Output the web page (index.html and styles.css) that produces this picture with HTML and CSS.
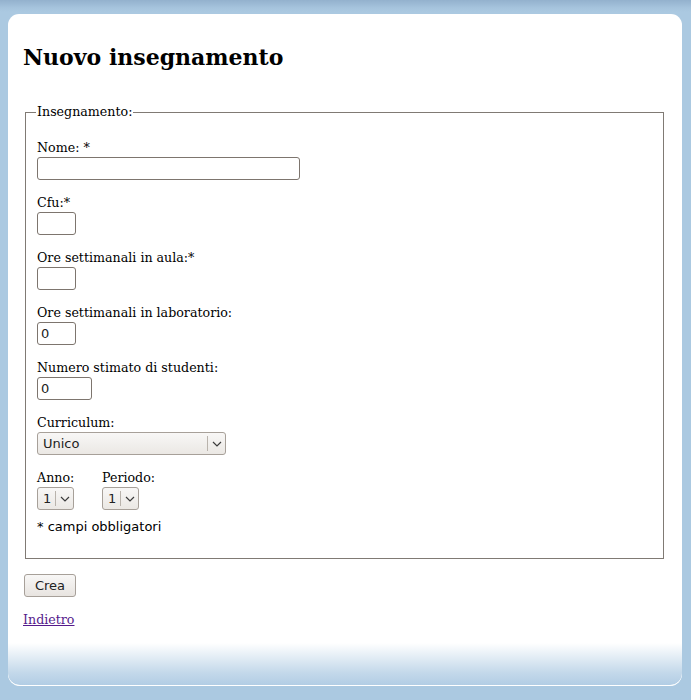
FILE: index.html
```html
<!DOCTYPE html>
<html lang="it">
<head>
<meta charset="utf-8">
<title>Nuovo insegnamento</title>
<link rel="stylesheet" href="styles.css">
</head>
<body>
<div class="panel">
  <div class="content">
    <h1 class="title">Nuovo insegnamento</h1>
    <form class="form">
      <fieldset class="box">
        <legend class="legend">Insegnamento:</legend>
        <div class="row">
          <label class="label">Nome: *</label>
          <input class="field w-name" type="text">
        </div>
        <div class="row">
          <label class="label">Cfu:*</label>
          <input class="field w-small" type="text">
        </div>
        <div class="row">
          <label class="label">Ore settimanali in aula:*</label>
          <input class="field w-small" type="text">
        </div>
        <div class="row">
          <label class="label">Ore settimanali in laboratorio:</label>
          <input class="field w-small" type="text" value="0">
        </div>
        <div class="row">
          <label class="label">Numero stimato di studenti:</label>
          <input class="field w-mid" type="text" value="0">
        </div>
        <div class="row">
          <label class="label">Curriculum:</label>
          <span class="sel w-curr">
            <span class="sel-text">Unico</span>
            <span class="sel-btn"><svg width="10" height="6" viewBox="0 0 10 6"><path d="M1 1 L5 5 L9 1" fill="none" stroke="#3c3c3c" stroke-width="1.2"/></svg></span>
          </span>
        </div>
        <div class="row pair">
          <div class="col">
            <label class="label">Anno:</label>
            <span class="sel w-num">
              <span class="sel-text">1</span>
              <span class="sel-btn"><svg width="10" height="6" viewBox="0 0 10 6"><path d="M1 1 L5 5 L9 1" fill="none" stroke="#3c3c3c" stroke-width="1.2"/></svg></span>
            </span>
          </div>
          <div class="col">
            <label class="label">Periodo:</label>
            <span class="sel w-num">
              <span class="sel-text">1</span>
              <span class="sel-btn"><svg width="10" height="6" viewBox="0 0 10 6"><path d="M1 1 L5 5 L9 1" fill="none" stroke="#3c3c3c" stroke-width="1.2"/></svg></span>
            </span>
          </div>
        </div>
        <p class="note">* campi obbligatori</p>
      </fieldset>
      <button class="btn" type="button">Crea</button>
    </form>
    <a class="back" href="#">Indietro</a>
  </div>
  <div class="foot"></div>
</div>
</body>
</html>
```

FILE: styles.css
```css
html, body {
  margin: 0;
  padding: 0;
}
body {
  background: linear-gradient(#93b1cd 0, #a6c4dd 8px, #abc9e1 12px) no-repeat, #abc9e1;
  background-size: 100% 14px, auto;
  font-family: "DejaVu Serif", serif;
  font-size: 12.65px;
  color: #000;
  padding: 14px 9px 15px 8px;
  height: 700px;
  box-sizing: border-box;
}
.panel {
  background: #fff;
  border-radius: 11px 11px 12px 12px;
  height: 671px;
  display: flex;
  flex-direction: column;
  overflow: hidden;
  border-bottom: 1px solid #fff;
}
.content {
  flex: 1;
  padding: 30px 15px 0 15px;
}
.foot {
  height: 42px;
  background: linear-gradient(#ffffff 0, #e3edf5 14px, #c3d8ea 30px, #b2cde4 42px);
  border-radius: 0 0 12px 12px;
}
.title {
  margin: 0;
  font-size: 22px;
  line-height: 26px;
  font-weight: bold;
}
.form {
  margin: 35px 0 0 0;
}
.box {
  margin: 0 3px 0 2px;
  border: 1px solid #807a74;
  padding: 20px 11px 23px 11px;
}
.legend {
  font-size: 12.65px;
  line-height: 14px;
  padding: 0 1px;
  margin-left: -1px;
}
.row {
  margin-bottom: 14px;
}
.label {
  display: block;
  line-height: 17px;
  height: 18px;
}
.field {
  display: block;
  box-sizing: border-box;
  height: 23px;
  border: 1px solid #7d756e;
  border-radius: 3px;
  padding: 0 3px;
  font-family: "DejaVu Sans", sans-serif;
  font-size: 13px;
  color: #222;
  margin: 0;
  background: #fff;
  outline: none;
}
.w-name { width: 263px; }
.w-small { width: 39px; }
.w-mid { width: 55px; }
.sel {
  position: relative;
  display: flex;
  align-items: center;
  box-sizing: border-box;
  height: 23px;
  border: 1px solid #a7a099;
  border-radius: 3px;
  background: linear-gradient(#f8f7f6, #ebe8e4);
  font-family: "DejaVu Sans", sans-serif;
  font-size: 13px;
  color: #222;
}
.w-curr { width: 189px; }
.w-num { width: 37px; }
.sel-text {
  flex: 1;
  padding-left: 5px;
}
.sel-btn {
  display: flex;
  align-items: center;
  justify-content: center;
  width: 17px;
  height: 15px;
  border-left: 1px solid #b9b3ac;
}
.pair {
  display: grid;
  grid-template-columns: 65px auto;
  margin-bottom: 8px;
}
.note {
  margin: 0;
  font-family: "DejaVu Sans", sans-serif;
  font-size: 13px;
  line-height: 17px;
}
.btn {
  display: block;
  margin: 15px 0 0 1px;
  box-sizing: border-box;
  width: 52px;
  height: 23px;
  border: 1px solid #a7a099;
  border-radius: 3px;
  background: linear-gradient(#f8f7f6, #e8e4e0);
  font-family: "DejaVu Sans", sans-serif;
  font-size: 13px;
  color: #222;
  padding: 0;
}
.back {
  display: inline-block;
  margin-top: 14px;
  color: #551a8b;
  text-decoration: underline;
  font-size: 12.65px;
  line-height: 17px;
}
```
